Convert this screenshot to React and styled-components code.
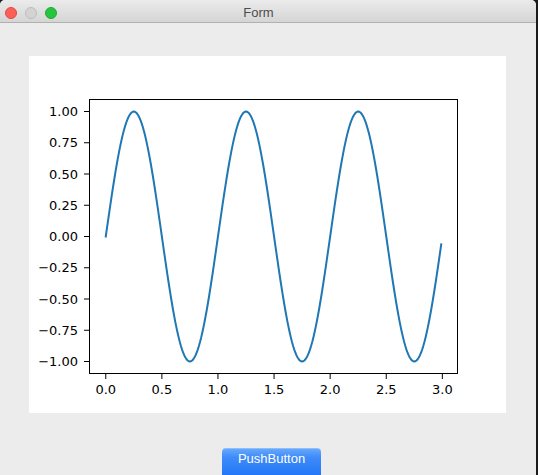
import React from "react";
import styled, { createGlobalStyle } from "styled-components";

const GlobalStyle = createGlobalStyle`
  html, body {
    margin: 0;
    padding: 0;
    background: #1b1b1b;
  }
  body {
    width: 538px;
    height: 475px;
    overflow: hidden;
  }
`;

const Window = styled.div`
  width: 536px;
  height: 475px;
  background: #ececec;
  border-radius: 5px 5px 0 0;
  overflow: hidden;
  display: flex;
  flex-direction: column;
  font-family: "Liberation Sans", Arial, sans-serif;
`;

const TitleBar = styled.div`
  height: 22px;
  flex: none;
  display: flex;
  align-items: center;
  background: linear-gradient(#ebebeb, #d5d5d5);
  border-bottom: 1px solid #b1b1b1;
  padding-left: 5px;
  gap: 8px;
`;

const Light = styled.span`
  width: 12px;
  height: 12px;
  border-radius: 50%;
  box-sizing: border-box;
  background: ${(p) => p.$color};
  border: 1px solid ${(p) => p.$edge};
  margin-top: 3px;
`;

const Title = styled.div`
  flex: 1;
  text-align: center;
  font-size: 13px;
  color: #4d4d4d;
  margin-top: 3px;
  padding-right: 84px;
`;

const Content = styled.div`
  flex: 1;
  display: flex;
  flex-direction: column;
  padding: 33px 30px 0 29px;
`;

const Panel = styled.div`
  width: 477px;
  height: 357px;
  background: #ffffff;
`;

const ButtonRow = styled.div`
  display: flex;
  justify-content: center;
  padding-left: 8px;
  margin-top: 35px;
`;

const PushButton = styled.button`
  width: 99px;
  height: 30px;
  border: none;
  border-radius: 4px;
  padding: 0 0 8px;
  background: linear-gradient(#6aabfb, #3f8cfa 30%, #1f74f6);
  color: #ffffff;
  font-family: "Liberation Sans", Arial, sans-serif;
  font-size: 13px;
  line-height: 22px;
  box-shadow: inset 0 1px 0 rgba(255, 255, 255, 0.25);
`;

// axes geometry inside the panel
const AX = { left: 60, top: 43, width: 369, height: 275 };
const XMIN = -0.1495;
const XMAX = 3.1395;
const YMIN = -1.1;
const YMAX = 1.1;

const px = (x) => AX.left + ((x - XMIN) / (XMAX - XMIN)) * AX.width;
const py = (y) => AX.top + ((YMAX - y) / (YMAX - YMIN)) * AX.height;

const xTicks = [0, 0.5, 1, 1.5, 2, 2.5, 3];
const yTicks = [1, 0.75, 0.5, 0.25, 0, -0.25, -0.5, -0.75, -1];

const fmtY = (v) => (v < 0 ? "\u2212" : "") + Math.abs(v).toFixed(2);

const buildPath = () => {
  const pts = [];
  for (let i = 0; i < 300; i++) {
    const x = i / 100;
    const y = Math.sin(2 * Math.PI * x);
    pts.push(`${px(x).toFixed(2)},${py(y).toFixed(2)}`);
  }
  return "M" + pts.join(" L");
};

const Plot = () => {
  const right = AX.left + AX.width;
  const bottom = AX.top + AX.height;
  return (
    <svg width="477" height="357" viewBox="0 0 477 357">
      <g fontFamily="'DejaVu Sans', sans-serif" fontSize="13" fill="#000">
        {yTicks.map((v) => (
          <g key={v}>
            <line
              x1={AX.left - 5}
              x2={AX.left}
              y1={py(v)}
              y2={py(v)}
              stroke="#000"
              strokeWidth="1"
            />
            <text x={AX.left - 11} y={py(v) + 4.7} textAnchor="end">
              {fmtY(v)}
            </text>
          </g>
        ))}
        {xTicks.map((v) => (
          <g key={v}>
            <line
              x1={px(v)}
              x2={px(v)}
              y1={bottom}
              y2={bottom + 5}
              stroke="#000"
              strokeWidth="1"
            />
            <text x={px(v)} y={bottom + 19.5} textAnchor="middle">
              {v.toFixed(1)}
            </text>
          </g>
        ))}
      </g>
      <path
        d={buildPath()}
        fill="none"
        stroke="#1f77b4"
        strokeWidth="2"
        strokeLinejoin="round"
        strokeLinecap="square"
      />
      <rect
        x={AX.left + 0.5}
        y={AX.top + 0.5}
        width={right - AX.left - 1}
        height={bottom - AX.top - 1}
        fill="none"
        stroke="#000"
        strokeWidth="1"
      />
    </svg>
  );
};

export default function App() {
  return (
    <>
      <GlobalStyle />
      <Window>
        <TitleBar>
          <Light $color="#fc5f57" $edge="#de4a43" />
          <Light $color="#d3d3d3" $edge="#bdbdbd" />
          <Light $color="#25c63c" $edge="#1ea933" />
          <Title>Form</Title>
        </TitleBar>
        <Content>
          <Panel>
            <Plot />
          </Panel>
          <ButtonRow>
            <PushButton>PushButton</PushButton>
          </ButtonRow>
        </Content>
      </Window>
    </>
  );
}
